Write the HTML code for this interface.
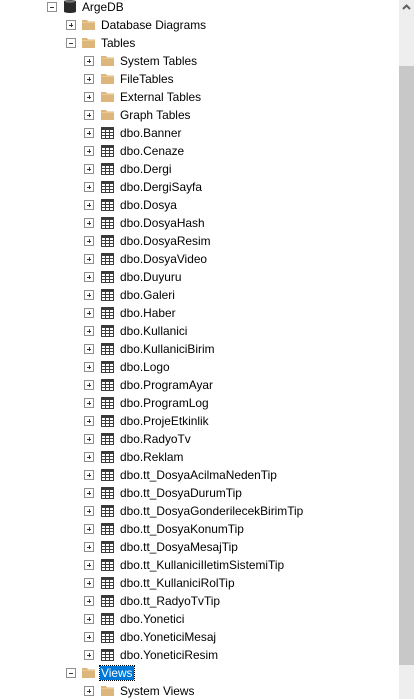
<!DOCTYPE html>
<html><head><meta charset="utf-8"><style>
html,body{margin:0;padding:0;background:#fff;width:416px;height:699px;overflow:hidden;position:relative;font-family:"Liberation Sans",sans-serif;font-size:11.9px;color:#000}
.r{position:absolute;height:18px;left:0;right:17px;margin-top:1px}
.e{position:absolute;top:4px;width:8px;height:8px;border:1px solid #8f8f8f;background:#fff}
.e::before{content:"";position:absolute;left:2px;top:3.5px;width:4px;height:1px;background:#333}
.p::after{content:"";position:absolute;left:3.5px;top:2px;width:1px;height:4px;background:#333}
.f{position:absolute;top:3px;width:13px;height:11px}
.t{position:absolute;top:2px;line-height:14px;white-space:nowrap}
.g{position:absolute;top:3px;width:13px;height:12px}
.sel{background:#0078d7;color:#fff;outline:1px dotted #000;padding:0 1px;margin-left:-1px}
</style></head><body>
<svg width="0" height="0" style="position:absolute"><defs>
<symbol id="fold" viewBox="0 0 13 11"><path d="M0 1h5l1 1.5h7V11H0z" fill="#dcb67a"/><path d="M0 3.5h13" stroke="#e8c992" stroke-width="1"/></symbol>
<symbol id="tab" viewBox="0 0 13 12"><rect width="13" height="12" fill="#3c3c3c"/><g fill="#fff"><rect x="1" y="3" width="3" height="2"/><rect x="5" y="3" width="3" height="2"/><rect x="9" y="3" width="3" height="2"/><rect x="1" y="6" width="3" height="2"/><rect x="5" y="6" width="3" height="2"/><rect x="9" y="6" width="3" height="2"/><rect x="1" y="9" width="3" height="2"/><rect x="5" y="9" width="3" height="2"/><rect x="9" y="9" width="3" height="2"/></g></symbol>
</defs></svg>

<div class="r" style="top:-3px"><div class="e" style="left:47px"></div><svg style="position:absolute;left:64px;top:1px" width="12" height="15" viewBox="0 0 12 15"><path d="M0 2.5C0 0.5 12 0.5 12 2.5V12.5C12 14.5 0 14.5 0 12.5Z" fill="#2b2b2b"/><ellipse cx="6" cy="2.5" rx="5" ry="1.3" fill="#777"/></svg><span class="t" style="left:82px">ArgeDB</span></div>

<div class="r" style="top:15px"><div class="e p" style="left:66px"></div><svg class="f" style="left:82px"><use href="#fold"/></svg><span class="t" style="left:101px">Database Diagrams</span></div>
<div class="r" style="top:33px"><div class="e" style="left:66px"></div><svg class="f" style="left:82px"><use href="#fold"/></svg><span class="t" style="left:101px">Tables</span></div>

<div class="r" style="top:51px"><div class="e p" style="left:84px"></div><svg class="f" style="left:101px"><use href="#fold"/></svg><span class="t" style="left:120px">System Tables</span></div>
<div class="r" style="top:69px"><div class="e p" style="left:84px"></div><svg class="f" style="left:101px"><use href="#fold"/></svg><span class="t" style="left:120px">FileTables</span></div>
<div class="r" style="top:87px"><div class="e p" style="left:84px"></div><svg class="f" style="left:101px"><use href="#fold"/></svg><span class="t" style="left:120px">External Tables</span></div>
<div class="r" style="top:105px"><div class="e p" style="left:84px"></div><svg class="f" style="left:101px"><use href="#fold"/></svg><span class="t" style="left:120px">Graph Tables</span></div>

<div class="r" style="top:123px"><div class="e p" style="left:84px"></div><svg class="g" style="left:101px"><use href="#tab"/></svg><span class="t" style="left:120px">dbo.Banner</span></div>
<div class="r" style="top:141px"><div class="e p" style="left:84px"></div><svg class="g" style="left:101px"><use href="#tab"/></svg><span class="t" style="left:120px">dbo.Cenaze</span></div>
<div class="r" style="top:159px"><div class="e p" style="left:84px"></div><svg class="g" style="left:101px"><use href="#tab"/></svg><span class="t" style="left:120px">dbo.Dergi</span></div>
<div class="r" style="top:177px"><div class="e p" style="left:84px"></div><svg class="g" style="left:101px"><use href="#tab"/></svg><span class="t" style="left:120px">dbo.DergiSayfa</span></div>
<div class="r" style="top:195px"><div class="e p" style="left:84px"></div><svg class="g" style="left:101px"><use href="#tab"/></svg><span class="t" style="left:120px">dbo.Dosya</span></div>
<div class="r" style="top:213px"><div class="e p" style="left:84px"></div><svg class="g" style="left:101px"><use href="#tab"/></svg><span class="t" style="left:120px">dbo.DosyaHash</span></div>
<div class="r" style="top:231px"><div class="e p" style="left:84px"></div><svg class="g" style="left:101px"><use href="#tab"/></svg><span class="t" style="left:120px">dbo.DosyaResim</span></div>
<div class="r" style="top:249px"><div class="e p" style="left:84px"></div><svg class="g" style="left:101px"><use href="#tab"/></svg><span class="t" style="left:120px">dbo.DosyaVideo</span></div>
<div class="r" style="top:267px"><div class="e p" style="left:84px"></div><svg class="g" style="left:101px"><use href="#tab"/></svg><span class="t" style="left:120px">dbo.Duyuru</span></div>
<div class="r" style="top:285px"><div class="e p" style="left:84px"></div><svg class="g" style="left:101px"><use href="#tab"/></svg><span class="t" style="left:120px">dbo.Galeri</span></div>
<div class="r" style="top:303px"><div class="e p" style="left:84px"></div><svg class="g" style="left:101px"><use href="#tab"/></svg><span class="t" style="left:120px">dbo.Haber</span></div>
<div class="r" style="top:321px"><div class="e p" style="left:84px"></div><svg class="g" style="left:101px"><use href="#tab"/></svg><span class="t" style="left:120px">dbo.Kullanici</span></div>
<div class="r" style="top:339px"><div class="e p" style="left:84px"></div><svg class="g" style="left:101px"><use href="#tab"/></svg><span class="t" style="left:120px">dbo.KullaniciBirim</span></div>
<div class="r" style="top:357px"><div class="e p" style="left:84px"></div><svg class="g" style="left:101px"><use href="#tab"/></svg><span class="t" style="left:120px">dbo.Logo</span></div>
<div class="r" style="top:375px"><div class="e p" style="left:84px"></div><svg class="g" style="left:101px"><use href="#tab"/></svg><span class="t" style="left:120px">dbo.ProgramAyar</span></div>
<div class="r" style="top:393px"><div class="e p" style="left:84px"></div><svg class="g" style="left:101px"><use href="#tab"/></svg><span class="t" style="left:120px">dbo.ProgramLog</span></div>
<div class="r" style="top:411px"><div class="e p" style="left:84px"></div><svg class="g" style="left:101px"><use href="#tab"/></svg><span class="t" style="left:120px">dbo.ProjeEtkinlik</span></div>
<div class="r" style="top:429px"><div class="e p" style="left:84px"></div><svg class="g" style="left:101px"><use href="#tab"/></svg><span class="t" style="left:120px">dbo.RadyoTv</span></div>
<div class="r" style="top:447px"><div class="e p" style="left:84px"></div><svg class="g" style="left:101px"><use href="#tab"/></svg><span class="t" style="left:120px">dbo.Reklam</span></div>
<div class="r" style="top:465px"><div class="e p" style="left:84px"></div><svg class="g" style="left:101px"><use href="#tab"/></svg><span class="t" style="left:120px">dbo.tt_DosyaAcilmaNedenTip</span></div>
<div class="r" style="top:483px"><div class="e p" style="left:84px"></div><svg class="g" style="left:101px"><use href="#tab"/></svg><span class="t" style="left:120px">dbo.tt_DosyaDurumTip</span></div>
<div class="r" style="top:501px"><div class="e p" style="left:84px"></div><svg class="g" style="left:101px"><use href="#tab"/></svg><span class="t" style="left:120px">dbo.tt_DosyaGonderilecekBirimTip</span></div>
<div class="r" style="top:519px"><div class="e p" style="left:84px"></div><svg class="g" style="left:101px"><use href="#tab"/></svg><span class="t" style="left:120px">dbo.tt_DosyaKonumTip</span></div>
<div class="r" style="top:537px"><div class="e p" style="left:84px"></div><svg class="g" style="left:101px"><use href="#tab"/></svg><span class="t" style="left:120px">dbo.tt_DosyaMesajTip</span></div>
<div class="r" style="top:555px"><div class="e p" style="left:84px"></div><svg class="g" style="left:101px"><use href="#tab"/></svg><span class="t" style="left:120px">dbo.tt_KullaniciIletimSistemiTip</span></div>
<div class="r" style="top:573px"><div class="e p" style="left:84px"></div><svg class="g" style="left:101px"><use href="#tab"/></svg><span class="t" style="left:120px">dbo.tt_KullaniciRolTip</span></div>
<div class="r" style="top:591px"><div class="e p" style="left:84px"></div><svg class="g" style="left:101px"><use href="#tab"/></svg><span class="t" style="left:120px">dbo.tt_RadyoTvTip</span></div>
<div class="r" style="top:609px"><div class="e p" style="left:84px"></div><svg class="g" style="left:101px"><use href="#tab"/></svg><span class="t" style="left:120px">dbo.Yonetici</span></div>
<div class="r" style="top:627px"><div class="e p" style="left:84px"></div><svg class="g" style="left:101px"><use href="#tab"/></svg><span class="t" style="left:120px">dbo.YoneticiMesaj</span></div>
<div class="r" style="top:645px"><div class="e p" style="left:84px"></div><svg class="g" style="left:101px"><use href="#tab"/></svg><span class="t" style="left:120px">dbo.YoneticiResim</span></div>

<div class="r" style="top:663px"><div class="e" style="left:66px"></div><svg class="f" style="left:82px"><use href="#fold"/></svg><span class="t sel" style="left:101px">Views</span></div>
<div class="r" style="top:681px"><div class="e p" style="left:84px"></div><svg class="f" style="left:101px"><use href="#fold"/></svg><span class="t" style="left:120px">System Views</span></div>

<div style="position:absolute;left:399px;top:0;width:15px;height:699px;background:#eeeeee"></div>
<svg style="position:absolute;left:402px;top:4px" width="9" height="6" viewBox="0 0 9 6"><path d="M1 5L4.5 1.5L8 5" stroke="#606060" stroke-width="2" fill="none"/></svg>
<div style="position:absolute;left:399px;top:66px;width:15px;height:599px;background:#c8c8c8"></div>
</body></html>
